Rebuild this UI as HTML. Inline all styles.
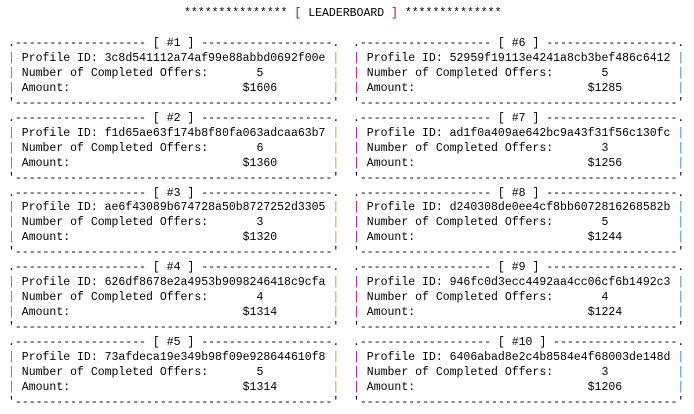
<!DOCTYPE html>
<html><head><meta charset="utf-8"><style>
body{margin:0;width:694px;height:414px;background:#fff;overflow:hidden;position:relative}
pre{margin:0;position:absolute;font-family:"Liberation Mono",monospace;font-size:11.5px;line-height:14.95px;color:#000}
.b{color:#3a86d0}.o{color:#e0902a}.m{color:#a0208a}.r{color:#a01020}
</style></head><body>
<pre style="left:184px;top:7px">*************** <span class="r">[</span> LEADERBOARD <span class="r">]</span> **************</pre>
<pre style="left:8px;top:37px">.------------------- [ #1 ] -------------------.
<span class="b">|</span> Profile ID: 3c8d541112a74af99e88abbd0692f00e <span class="o">|</span>
<span class="b">|</span> Number of Completed Offers:       5          <span class="o">|</span>
<span class="b">|</span> Amount:                         $1606        <span class="o">|</span>
'----------------------------------------------'
.------------------- [ #2 ] -------------------.
<span class="b">|</span> Profile ID: f1d65ae63f174b8f80fa063adcaa63b7 <span class="o">|</span>
<span class="b">|</span> Number of Completed Offers:       6          <span class="o">|</span>
<span class="b">|</span> Amount:                         $1360        <span class="o">|</span>
'----------------------------------------------'
.------------------- [ #3 ] -------------------.
<span class="b">|</span> Profile ID: ae6f43089b674728a50b8727252d3305 <span class="o">|</span>
<span class="b">|</span> Number of Completed Offers:       3          <span class="o">|</span>
<span class="b">|</span> Amount:                         $1320        <span class="o">|</span>
'----------------------------------------------'
.------------------- [ #4 ] -------------------.
<span class="b">|</span> Profile ID: 626df8678e2a4953b9098246418c9cfa <span class="o">|</span>
<span class="b">|</span> Number of Completed Offers:       4          <span class="o">|</span>
<span class="b">|</span> Amount:                         $1314        <span class="o">|</span>
'----------------------------------------------'
.------------------- [ #5 ] -------------------.
<span class="b">|</span> Profile ID: 73afdeca19e349b98f09e928644610f8 <span class="o">|</span>
<span class="b">|</span> Number of Completed Offers:       5          <span class="o">|</span>
<span class="b">|</span> Amount:                         $1314        <span class="o">|</span>
'----------------------------------------------'</pre>
<pre style="left:353px;top:37px">.------------------- [ #6 ] -------------------.
<span class="m">|</span> Profile ID: 52959f19113e4241a8cb3bef486c6412 <span class="b">|</span>
<span class="m">|</span> Number of Completed Offers:       5          <span class="b">|</span>
<span class="m">|</span> Amount:                         $1285        <span class="b">|</span>
'----------------------------------------------'
.------------------- [ #7 ] -------------------.
<span class="m">|</span> Profile ID: ad1f0a409ae642bc9a43f31f56c130fc <span class="b">|</span>
<span class="m">|</span> Number of Completed Offers:       3          <span class="b">|</span>
<span class="m">|</span> Amount:                         $1256        <span class="b">|</span>
'----------------------------------------------'
.------------------- [ #8 ] -------------------.
<span class="m">|</span> Profile ID: d240308de0ee4cf8bb6072816268582b <span class="b">|</span>
<span class="m">|</span> Number of Completed Offers:       5          <span class="b">|</span>
<span class="m">|</span> Amount:                         $1244        <span class="b">|</span>
'----------------------------------------------'
.------------------- [ #9 ] -------------------.
<span class="m">|</span> Profile ID: 946fc0d3ecc4492aa4cc06cf6b1492c3 <span class="b">|</span>
<span class="m">|</span> Number of Completed Offers:       4          <span class="b">|</span>
<span class="m">|</span> Amount:                         $1224        <span class="b">|</span>
'----------------------------------------------'
.------------------- [ #10 ] ------------------.
<span class="m">|</span> Profile ID: 6406abad8e2c4b8584e4f68003de148d <span class="b">|</span>
<span class="m">|</span> Number of Completed Offers:       3          <span class="b">|</span>
<span class="m">|</span> Amount:                         $1206        <span class="b">|</span>
'----------------------------------------------'</pre>
</body></html>
